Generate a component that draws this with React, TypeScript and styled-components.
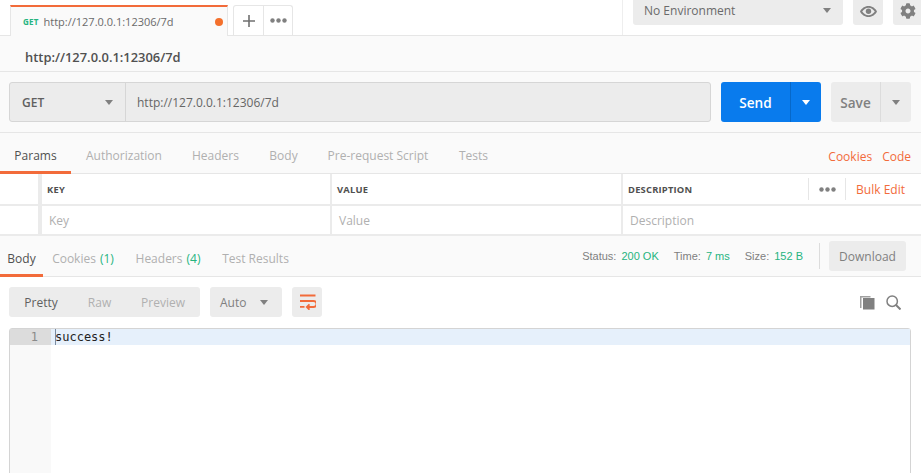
import React from "react";
import styled, { createGlobalStyle } from "styled-components";
import { FaCog } from "react-icons/fa";

const Global = createGlobalStyle`
  html, body { margin: 0; padding: 0; background: #fff; overflow: hidden; }
  #root { width: 921px; height: 473px; overflow: hidden; }
  * { box-sizing: border-box; }
`;

const Page = styled.div`
  width: 921px; height: 473px; overflow: hidden; display: flex; flex-direction: column;
  font-family: "Open Sans", "Liberation Sans", sans-serif; color: #505050; background: #fff;
`;
const TopBar = styled.div`
  height: 36px; flex: none; display: flex; border-bottom: 1px solid #e6e6e6; background: #fff; padding-left: 10px;
`;
const ActiveTab = styled.div`
  width: 218px; flex: none; height: 31px; margin-top: 5px; border-top: 2px solid #f26b3a; border-left: 1px solid #e6e6e6; border-right: 1px solid #e6e6e6;
  display: flex; align-items: center; padding: 0 0 0 12px; background: #fafafa; margin-bottom: -1px; font-size: 11px;
`;
const TabMethod = styled.span`
  color: #26b47f; font-size: 8px; font-weight: 700; letter-spacing: .2px; margin-right: 5px;
`;
const TabUrl = styled.span`
  color: #6a6a6a; font-size: 11px; flex: 1;
`;
const Dot = styled.span`
  width: 8px; height: 8px; border-radius: 50%; background: #f4702c; margin-right: 4px;
`;
const TabTools = styled.div`
  display: flex; flex: none; margin: 5px 0 0 5px; height: 30px; border: 1px solid #e6e6e6; border-bottom: none; border-radius: 3px 3px 0 0;
`;
const TabTool = styled.div<{ $divider?: boolean }>`
  width: ${p => (p.$divider ? 30 : 28)}px; display: flex; align-items: center; justify-content: center;
  border-right: ${p => (p.$divider ? "1px solid #e6e6e6" : "none")}; color: #808080;
`;
const EnvArea = styled.div`
  margin-left: auto; height: 35px; display: flex; align-items: flex-start; gap: 10px; border-left: 1px solid #eeeeee; padding-left: 10px; width: 299px; flex: none;
`;
const EnvSelect = styled.div`
  width: 210px; flex: none; height: 25px; background: #ececec; border-radius: 0 0 3px 3px; display: flex; align-items: center; justify-content: space-between;
  padding: 0 12px 4px 11px; font-size: 12px; color: #6a6a6a;
`;
const IconButton = styled.div<{ $w: number }>`
  width: ${p => p.$w}px; flex: none; height: 25px; background: #ececec; border-radius: 0 0 3px 3px; display: flex; align-items: center; justify-content: center; color: #808080; padding-bottom: 3px;
`;
const Caret = styled.span<{ $color?: string }>`
  display: inline-block; width: 0; height: 0; border-left: 4.5px solid transparent; border-right: 4.5px solid transparent; border-top: 5px solid ${p => p.$color ?? "#808080"};
`;
const TitleBar = styled.div`
  height: 36px; flex: none; background: #fafafa; border-bottom: 1px solid #e6e6e6; display: flex; align-items: center; padding: 7px 0 0 25px;
  font-size: 12.9px; font-weight: 600; color: #505050;
`;
const RequestRow = styled.div`
  height: 61px; flex: none; background: #fafafa; border-bottom: 1px solid #e6e6e6; display: flex; padding: 10px 10px 0 9px;
`;
const UrlGroup = styled.div`
  width: 702px; flex: none; height: 40px; display: flex; background: #ececec; border: 1px solid #d6d6d6; border-radius: 3px; font-size: 12px; color: #666;
`;
const MethodSelect = styled.div`
  width: 116px; flex: none; display: flex; align-items: center; justify-content: space-between; border-right: 1px solid #d6d6d6; padding: 0 12px;
  color: #606060; font-size: 12px; font-weight: 600;
`;
const UrlText = styled.div`
  display: flex; align-items: center; padding-left: 11px; font-size: 12px;
`;
const SplitButton = styled.div<{ $bg: string; $line: string; $color: string; $main: number; $w: number }>`
  width: ${p => p.$w}px; height: 40px; margin-left: 10px; border-radius: 3px; background: ${p => p.$bg}; color: ${p => p.$color}; display: flex; flex: none; font-size: 13.6px; font-weight: 600;
  & > :first-child { width: ${p => p.$main}px; display: flex; align-items: center; justify-content: center; border-right: 1px solid ${p => p.$line}; }
  & > :last-child { flex: 1; display: flex; align-items: center; justify-content: center; }
`;
const TabsRow = styled.div`
  height: 41px; flex: none; background: #fafafa; display: flex; align-items: stretch; border-bottom: 1px solid #e6e6e6;
`;
const TabLink = styled.div<{ $active?: boolean; $w: number }>`
  width: ${p => p.$w}px; flex: none; display: flex; align-items: center; justify-content: center; padding-top: 7px; font-size: 12px;
  color: ${p => (p.$active ? "#505050" : "#b0b0b0")}; margin-bottom: -1px;
  border-bottom: 3px solid ${p => (p.$active ? "#f26b3a" : "transparent")};
`;
const Count = styled.span`
  color: #26b47f; margin-left: 4px;
`;
const RightLinks = styled.div`
  margin-left: auto; display: flex; align-items: center; gap: 10px; padding: 6px 10px 0 0; font-size: 12px; color: #f26b3a;
`;
const ParamGrid = styled.div`
  flex: none; height: 62px; display: grid; grid-template-columns: 40px 288px 289px 1fr; grid-template-rows: 30px 28px; gap: 2px; background: #ebebeb; border-bottom: 2px solid #ebebeb;
`;
const Cell = styled.div`
  background: #fff; display: flex; align-items: center; padding-left: 5px;
`;
const MarkerCell = styled.div`
  background: #fff; margin-right: 2px;
`;
const Head = styled.span`
  font-size: 9.4px; font-weight: 700; color: #505050; letter-spacing: .2px;
`;
const Placeholder = styled.span`
  font-size: 12px; color: #b0b0b0; padding-left: 2px;
`;
const HeadTools = styled.div`
  margin-left: auto; display: flex; align-items: center; height: 100%; font-size: 12px; color: #f26b3a; padding-right: 16px;
`;
const Dots = styled.span`
  width: 38px; height: 22px; display: flex; align-items: center; justify-content: center; border-left: 1px solid #e6e6e6; border-right: 1px solid #e6e6e6; margin-right: 10px;
`;
const StatusBar = styled.div`
  margin-left: auto; display: flex; align-items: center; padding-right: 15px; font-family: "Liberation Sans", Arial, sans-serif; font-size: 11px; color: #808080;
`;
const StatusItem = styled.span`
  margin-right: 15px; white-space: pre;
`;
const StatusValue = styled.span`
  color: #26b47f; margin-left: 2px;
`;
const StatusDivider = styled.span`
  width: 1px; height: 26px; background: #dcdcdc; margin: 0 9px 0 1px;
`;
const Download = styled.div`
  width: 77px; height: 30px; background: #ececec; border-radius: 3px; display: flex; align-items: center; justify-content: center; font-family: "Open Sans", sans-serif; font-size: 12px; color: #808080;
`;
const Toolbar = styled.div`
  height: 51px; flex: none; display: flex; align-items: flex-start; padding: 10px 10px 0 9px; gap: 10px;
`;
const Segmented = styled.div`
  width: 191px; height: 30px; background: #ececec; border-radius: 3px; display: flex; align-items: center; font-size: 12px; color: #b0b0b0;
`;
const Segment = styled.span<{ $active?: boolean; $w: number }>`
  width: ${p => p.$w}px; text-align: center; color: ${p => (p.$active ? "#606060" : "#b0b0b0")};
`;
const AutoSelect = styled.div`
  width: 72px; height: 30px; background: #ececec; border-radius: 3px; display: flex; align-items: center; justify-content: space-between; padding: 0 14px 0 10px; font-size: 12px; color: #808080;
`;
const WrapButton = styled.div`
  width: 30px; height: 30px; background: #ececec; border-radius: 3px; display: flex; align-items: center; justify-content: center;
`;
const ToolIcons = styled.div`
  margin-left: auto; display: flex; align-items: center; gap: 11px; height: 30px; padding-right: 10px;
`;
const Editor = styled.div`
  margin-left: 9px; width: 902px; height: 200px; flex: none; border: 1px solid #d4d4d4; border-radius: 3px 3px 0 0; display: flex;
  font-family: "DejaVu Sans Mono", "Liberation Mono", monospace; font-size: 12px; background: #fff;
`;
const Gutter = styled.div`
  width: 41px; flex: none; background: #f9f9f9;
`;
const LineNumber = styled.div`
  height: 16px; background: #dcdcdc; color: #8a8a8a; text-align: right; padding-right: 13px; line-height: 16px;
`;
const Code = styled.div`
  flex: 1; height: 16px; background: #e6f0fb; line-height: 17px; color: #222; padding-left: 4px; position: relative;
`;
const Cursor = styled.span`
  position: absolute; left: 4px; top: 0; width: 1px; height: 16px; background: #7a8ba0;
`;

const Eye = () => (
  <svg width="17" height="11" viewBox="0 0 17 11" aria-hidden>
    <path fillRule="evenodd" fill="#808080" d="M8.5 0C4.6 0 1.6 2.4 0 5.5 1.6 8.6 4.6 11 8.5 11s6.9-2.4 8.5-5.5C15.400 2.400 12.400 0 8.500 0zm0 1.700c2.400 0 4.600 1.400 6.300 3.800-1.700 2.400-3.900 3.800-6.300 3.800S3.900 7.900 2.200 5.500C3.900 3.100 6.100 1.700 8.500 1.700z" />
    <circle cx="8.500" cy="5.300" r="2.700" fill="#808080" />
  </svg>
);
const ThreeDots = ({ color = "#808080" }: { color?: string }) => (
  <svg width="17" height="5" viewBox="0 0 17 5" aria-hidden>
    <circle cx="2.500" cy="2.500" r="2.200" fill={color} /><circle cx="8.500" cy="2.500" r="2.200" fill={color} /><circle cx="14.500" cy="2.500" r="2.200" fill={color} />
  </svg>
);
const Plus = () => (
  <svg width="12" height="12" viewBox="0 0 12 12" aria-hidden><path d="M6 0v12M0 6h12" stroke="#707070" strokeWidth="1.600" /></svg>
);
const WrapIcon = () => (
  <svg width="17" height="16" viewBox="0 0 17 16" aria-hidden fill="none" stroke="#f26b3a" strokeWidth="1.800">
    <path d="M1 1.500h15.500M1 7h13.500a2.300 2.300 0 0 1 0 6H8M1 12.800h4.500" />
    <path d="M10.500 10.300 7.800 13l2.700 2.700" />
  </svg>
);
const CopyIcon = () => (
  <svg width="15" height="15" viewBox="0 0 15 15" aria-hidden>
    <path fill="#a0a0a0" d="M0 1h10.500v1.500H1.500V13H0z" />
    <rect x="3" y="3" width="11.500" height="11.500" fill="#808080" />
  </svg>
);
const SearchIcon = () => (
  <svg width="15" height="15" viewBox="0 0 15 15" aria-hidden fill="none" stroke="#808080" strokeWidth="1.500">
    <circle cx="6.200" cy="6.200" r="5.200" /><path d="M10 10l4.500 4.500" strokeWidth="2" />
  </svg>
);

export default function App() {
  return (
    <Page>
      <Global />
      <TopBar>
        <ActiveTab>
          <TabMethod>GET</TabMethod>
          <TabUrl>http://127.0.0.1:12306/7d</TabUrl>
          <Dot />
        </ActiveTab>
        <TabTools>
          <TabTool $divider><Plus /></TabTool>
          <TabTool><ThreeDots /></TabTool>
        </TabTools>
        <EnvArea>
          <EnvSelect>No Environment<Caret /></EnvSelect>
          <IconButton $w={30}><Eye /></IconButton>
          <IconButton $w={30}><FaCog size={16} /></IconButton>
        </EnvArea>
      </TopBar>
      <TitleBar>http://127.0.0.1:12306/7d</TitleBar>
      <RequestRow>
        <UrlGroup>
          <MethodSelect>GET<Caret /></MethodSelect>
          <UrlText>http://127.0.0.1:12306/7d</UrlText>
        </UrlGroup>
        <SplitButton $bg="#097bed" $line="#0668c9" $color="#fff" $main={70} $w={100}>
          <span>Send</span><span><Caret $color="#fff" /></span>
        </SplitButton>
        <SplitButton $bg="#ececec" $line="#dcdcdc" $color="#808080" $main={50} $w={80}>
          <span>Save</span><span><Caret /></span>
        </SplitButton>
      </RequestRow>
      <TabsRow>
        <TabLink $active $w={71}>Params</TabLink>
        <TabLink $w={106}>Authorization</TabLink>
        <TabLink $w={77}>Headers</TabLink>
        <TabLink $w={59}>Body</TabLink>
        <TabLink $w={130}>Pre-request Script</TabLink>
        <TabLink $w={61}>Tests</TabLink>
        <RightLinks><span>Cookies</span><span>Code</span></RightLinks>
      </TabsRow>
      <ParamGrid>
        <MarkerCell />
        <Cell><Head>KEY</Head></Cell>
        <Cell><Head>VALUE</Head></Cell>
        <Cell>
          <Head>DESCRIPTION</Head>
          <HeadTools><Dots><ThreeDots /></Dots><span>Bulk Edit</span></HeadTools>
        </Cell>
        <MarkerCell />
        <Cell><Placeholder>Key</Placeholder></Cell>
        <Cell><Placeholder>Value</Placeholder></Cell>
        <Cell><Placeholder>Description</Placeholder></Cell>
      </ParamGrid>
      <TabsRow>
        <TabLink $active $w={43}>Body</TabLink>
        <TabLink $w={80}>Cookies<Count>(1)</Count></TabLink>
        <TabLink $w={90}>Headers<Count>(4)</Count></TabLink>
        <TabLink $w={85}>Test Results</TabLink>
        <StatusBar>
          <StatusItem>Status: <StatusValue>200 OK</StatusValue></StatusItem>
          <StatusItem>Time: <StatusValue>7 ms</StatusValue></StatusItem>
          <StatusItem>Size: <StatusValue>152 B</StatusValue></StatusItem>
          <StatusDivider />
          <Download>Download</Download>
        </StatusBar>
      </TabsRow>
      <Toolbar>
        <Segmented>
          <Segment $active $w={64}>Pretty</Segment>
          <Segment $w={53}>Raw</Segment>
          <Segment $w={74}>Preview</Segment>
        </Segmented>
        <AutoSelect>Auto<Caret /></AutoSelect>
        <WrapButton><WrapIcon /></WrapButton>
        <ToolIcons><CopyIcon /><SearchIcon /></ToolIcons>
      </Toolbar>
      <Editor>
        <Gutter><LineNumber>1</LineNumber></Gutter>
        <Code><Cursor />success!</Code>
      </Editor>
    </Page>
  );
}
